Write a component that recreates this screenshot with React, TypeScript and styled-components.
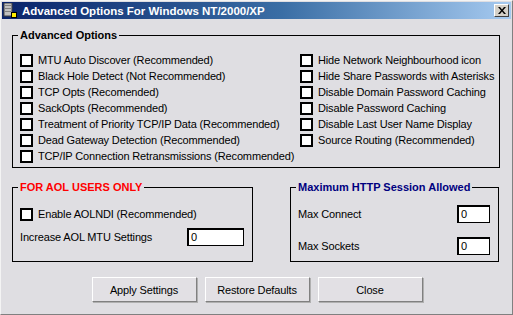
import React from "react";
import styled, { createGlobalStyle } from "styled-components";

const GlobalStyle = createGlobalStyle`
  html, body {
    margin: 0;
    padding: 0;
    background: #dfdee2;
  }
  body {
    font-family: "Liberation Sans", Arial, sans-serif;
    font-size: 11px;
    color: #000;
  }
`;

const leftOptions = [
  "MTU Auto Discover (Recommended)",
  "Black Hole Detect (Not Recommended)",
  "TCP Opts (Recomended)",
  "SackOpts (Recommended)",
  "Treatment of Priority TCP/IP Data (Recommended)",
  "Dead Gateway Detection (Recommended)",
  "TCP/IP Connection Retransmissions (Recommended)",
];

const rightOptions = [
  "Hide Network Neighbourhood icon",
  "Hide Share Passwords with Asterisks",
  "Disable Domain Password Caching",
  "Disable Password Caching",
  "Disable Last User Name Display",
  "Source Routing (Recommended)",
];

// Window frame
const Window = styled.div`
  box-sizing: border-box;
  width: 513px;
  height: 315px;
  display: flex;
  flex-direction: column;
  padding: 1px;
  border: 1px solid;
  border-color: #f4f4f4 #808080 #808080 #f4f4f4;
  background: #dfdee2;
`;

const TitleBar = styled.div`
  height: 17px;
  display: flex;
  align-items: center;
  padding: 0 2px 0 1px;
  background: linear-gradient(to right, #0a246a 0%, #3a6ea5 55%, #a6caf0 100%);
`;

const TitleText = styled.span`
  flex: 1;
  margin-left: 3px;
  color: #fff;
  font-weight: bold;
  font-size: 11.5px;
  white-space: nowrap;
`;

const CloseButton = styled.div`
  box-sizing: border-box;
  width: 15px;
  height: 13px;
  display: flex;
  align-items: center;
  justify-content: center;
  background: #d4d0c8;
  border: 1px solid;
  border-color: #fff #404040 #404040 #fff;
`;

const Content = styled.div`
  flex: 1;
  display: flex;
  flex-direction: column;
  padding: 10px 11px 0 10px;
  letter-spacing: -0.15px;
`;

const Group = styled.fieldset<{ $height?: number }>`
  margin: 0;
  min-width: 0;
  border: 1px solid #000;
  padding: ${(p) => (p.$height ? "0 8px 0 7px" : "10px 7px 3px 7px")};
  ${(p) => (p.$height ? `height: ${p.$height}px; box-sizing: border-box;` : "")}
`;

const Legend = styled.legend<{ $color?: string }>`
  margin-left: -2px;
  padding: 0 2px;
  font-weight: bold;
  font-size: 11px;
  line-height: 13px;
  letter-spacing: 0;
  color: ${(p) => p.$color || "#000"};
`;

const OptionGrid = styled.div`
  display: grid;
  grid-template-columns: 280px 1fr;
`;

const Column = styled.div`
  display: flex;
  flex-direction: column;
`;

const CheckRow = styled.label`
  height: 16px;
  display: flex;
  align-items: center;
  gap: 5px;
  white-space: nowrap;
`;

const Box = styled.span`
  box-sizing: border-box;
  width: 13px;
  height: 13px;
  flex: none;
  background: #fff;
  border: 2px solid #000;
`;

const BottomRow = styled.div`
  margin-top: 13px;
  display: grid;
  grid-template-columns: 241px 209px;
  justify-content: space-between;
  padding-right: 1px;
`;

const GroupBody = styled.div<{ $top: number; $gap: number }>`
  display: flex;
  flex-direction: column;
  gap: ${(p) => p.$gap}px;
  padding-top: ${(p) => p.$top}px;
`;

const FieldRow = styled.div`
  height: 18px;
  display: flex;
  align-items: center;
  justify-content: space-between;
`;

const TextBox = styled.div<{ $width: number }>`
  box-sizing: border-box;
  width: ${(p) => p.$width}px;
  height: 18px;
  padding: 1px 2px;
  background: #fff;
  border: 1px solid #000;
  border-top-width: 2px;
  border-left-width: 2px;
  line-height: 13px;
`;

const ButtonRow = styled.div`
  margin-top: 15px;
  display: flex;
  justify-content: center;
  gap: 8px;
  padding-left: 2px;
`;

const Button = styled.button`
  box-sizing: border-box;
  width: 105px;
  height: 25px;
  font-family: "Liberation Sans", Arial, sans-serif;
  font-size: 11px;
  letter-spacing: -0.15px;
  color: #000;
  background: #e2e0e4;
  border: 1px solid;
  border-color: #fff #808080 #808080 #fff;
  box-shadow: 1px 1px 0 #b0b0b0;
  padding: 0;
`;

const AppIcon = () => (
  <svg width="16" height="16" viewBox="0 0 16 16">
    <rect x="1" y="0" width="8" height="13" fill="#c0c0c0" stroke="#404040" />
    <rect x="2" y="2" width="6" height="1" fill="#808080" />
    <rect x="2" y="5" width="6" height="1" fill="#808080" />
    <rect x="2" y="8" width="6" height="1" fill="#808080" />
    <rect x="8" y="9" width="6" height="6" fill="#000" />
    <rect x="9" y="10" width="4" height="4" fill="#ffee00" />
  </svg>
);

const CloseGlyph = () => (
  <svg width="8" height="7" viewBox="0 0 8 7">
    <path d="M0 0h2l2 2.5L6 0h2L5 3.5 8 7H6L4 4.5 2 7H0l3-3.5z" fill="#000" />
  </svg>
);

const App: React.FC = () => {
  return (
    <>
      <GlobalStyle />
      <Window>
        <TitleBar>
          <AppIcon />
          <TitleText>Advanced Options For Windows NT/2000/XP</TitleText>
          <CloseButton>
            <CloseGlyph />
          </CloseButton>
        </TitleBar>

        <Content>
          <Group>
            <Legend>Advanced Options</Legend>
            <OptionGrid>
              <Column>
                {leftOptions.map((o) => (
                  <CheckRow key={o}>
                    <Box />
                    {o}
                  </CheckRow>
                ))}
              </Column>
              <Column>
                {rightOptions.map((o) => (
                  <CheckRow key={o}>
                    <Box />
                    {o}
                  </CheckRow>
                ))}
              </Column>
            </OptionGrid>
          </Group>

          <BottomRow>
            <Group $height={81}>
              <Legend $color="#ff0000">FOR AOL USERS ONLY</Legend>
              <GroupBody $top={12} $gap={6}>
                <CheckRow>
                  <Box />
                  Enable AOLNDI (Recommended)
                </CheckRow>
                <FieldRow>
                  Increase AOL MTU Settings
                  <TextBox $width={57}>0</TextBox>
                </FieldRow>
              </GroupBody>
            </Group>

            <Group $height={81}>
              <Legend $color="#000080">Maximum HTTP Session Allowed</Legend>
              <GroupBody $top={11} $gap={14}>
                <FieldRow>
                  Max Connect
                  <TextBox $width={33}>0</TextBox>
                </FieldRow>
                <FieldRow>
                  Max Sockets
                  <TextBox $width={33}>0</TextBox>
                </FieldRow>
              </GroupBody>
            </Group>
          </BottomRow>

          <ButtonRow>
            <Button>Apply Settings</Button>
            <Button>Restore Defaults</Button>
            <Button>Close</Button>
          </ButtonRow>
        </Content>
      </Window>
    </>
  );
};

export default App;
